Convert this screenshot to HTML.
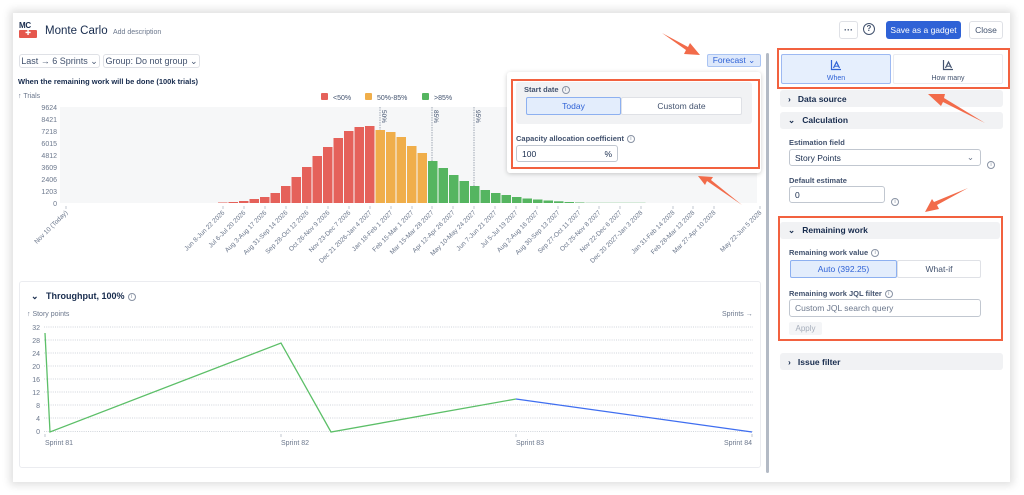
<!DOCTYPE html>
<html><head><meta charset="utf-8"><style>
*{box-sizing:border-box;margin:0;padding:0}
body{width:1024px;height:495px;background:#fff;font-family:"Liberation Sans",sans-serif;color:#172b4d;position:relative;overflow:hidden}
.a{position:absolute}
.card{left:13px;top:13px;width:997px;height:469px;background:#fff;box-shadow:0 0 8px 3px rgba(0,0,0,.13)}
.btn{border:1px solid #dfe1e6;border-radius:3px;background:#fff;font-size:9px;color:#42526e;display:flex;align-items:center;justify-content:center}
.sec{background:#f1f2f4;border-radius:3px;font-size:8.5px;font-weight:bold;color:#172b4d;display:flex;align-items:center;padding-left:8px}
.lbl{font-size:7.5px;font-weight:bold;color:#42526e;display:flex;align-items:center;gap:3px}
.inp{border:1px solid #c1c7d0;border-radius:3px;background:#fff;font-size:8.5px;color:#172b4d;display:flex;align-items:center;padding-left:5px}
.red{border:2px solid #f2613f}
.info{display:inline-block;width:8px;height:8px;border:1px solid #8993a4;border-radius:50%;font-size:6px;line-height:6px;text-align:center;color:#8993a4;font-weight:normal}
svg text{font-family:"Liberation Sans",sans-serif}
</style></head><body>
<div class="a card"></div>
<div class="a" style="left:19px;top:22px;width:18px;height:17px">
 <div style="font-size:8px;font-weight:bold;line-height:8px;color:#172b4d;letter-spacing:-.3px">MC</div>
 <div style="width:18px;height:8px;background:#e5574d;border-radius:1px;color:#fff;font-size:7px;line-height:8px;text-align:center">✚</div>
</div>
<div class="a" style="left:45px;top:25px;font-size:11.5px;color:#172b4d">Monte Carlo</div>
<div class="a" style="left:113px;top:29px;font-size:7px;color:#6b778c">Add description</div>
<div class="a btn" style="left:839px;top:21px;width:19px;height:18px;font-weight:bold">···</div>
<div class="a" style="left:863px;top:23px;width:12px;height:12px;border:1.3px solid #42526e;border-radius:50%;font-size:8px;font-weight:bold;text-align:center;line-height:10px;color:#42526e">?</div>
<div class="a" style="left:886px;top:21px;width:75px;height:18px;background:#2f62d6;border-radius:3px;color:#fff;font-size:8.5px;display:flex;align-items:center;justify-content:center">Save as a gadget</div>
<div class="a btn" style="left:969px;top:21px;width:34px;height:18px;font-size:8.5px;color:#42526e">Close</div>
<div class="a btn" style="left:19px;top:54px;width:81px;height:14px">Last → 6 Sprints ⌄</div>
<div class="a btn" style="left:103px;top:54px;width:97px;height:14px">Group: Do not group ⌄</div>
<div class="a" style="left:18px;top:77px;font-size:7.5px;font-weight:bold">When the remaining work will be done (100k trials)</div>
<div class="a" style="left:18px;top:93px;font-size:7px;color:#6b778c">↑ Trials</div>
<div class="a" style="left:707px;top:54px;width:54px;height:13px;background:#dde8fb;border:1px solid #aac4f3;border-radius:2px;font-size:8.5px;color:#2f62d6;display:flex;align-items:center;justify-content:center">Forecast ⌄</div>
<svg class="a" style="left:0;top:0" width="770" height="280">
<g font-size="7" fill="#42526e">
<rect x="321" y="93" width="7" height="7" rx="1" fill="#e5615a"/><text x="333" y="100">&lt;50%</text>
<rect x="365" y="93" width="7" height="7" rx="1" fill="#f0ae4a"/><text x="377" y="100">50%-85%</text>
<rect x="422" y="93" width="7" height="7" rx="1" fill="#55b560"/><text x="434" y="100">&gt;85%</text>
</g>
<rect x="60" y="107" width="697" height="96" fill="#f6f7f8"/>
<g font-size="7" fill="#6b778c" text-anchor="end">
<text x="57" y="110">9624</text><text x="57" y="122">8421</text><text x="57" y="134">7218</text><text x="57" y="146">6015</text><text x="57" y="158">4812</text><text x="57" y="170">3609</text><text x="57" y="182">2406</text><text x="57" y="194">1203</text><text x="57" y="206">0</text>
</g>
<g fill="#e5615a">
<rect x="218" y="202.5" width="9.5" height=".5"/><rect x="228.5" y="202" width="9.5" height="1"/><rect x="239" y="201" width="9.5" height="2"/><rect x="249.5" y="199" width="9.5" height="4"/><rect x="260" y="197" width="9.5" height="6"/><rect x="270.5" y="193" width="9.5" height="10"/><rect x="281" y="186" width="9.5" height="17"/><rect x="291.5" y="177" width="9.5" height="26"/><rect x="302" y="167" width="9.5" height="36"/><rect x="312.5" y="156" width="9.5" height="47"/><rect x="323" y="147" width="9.5" height="56"/><rect x="333.5" y="138" width="9.5" height="65"/><rect x="344" y="131" width="9.5" height="72"/><rect x="354.5" y="127" width="9.5" height="76"/><rect x="365" y="126" width="9.5" height="77"/>
</g>
<g fill="#f0ae4a">
<rect x="375.5" y="130" width="9.5" height="73"/><rect x="386" y="132" width="9.5" height="71"/><rect x="396.5" y="137" width="9.5" height="66"/><rect x="407" y="146" width="9.5" height="57"/><rect x="417.5" y="153" width="9.5" height="50"/>
</g>
<g fill="#55b560">
<rect x="428" y="161" width="9.5" height="42"/><rect x="438.5" y="168" width="9.5" height="35"/><rect x="449" y="175" width="9.5" height="28"/><rect x="459.5" y="181" width="9.5" height="22"/><rect x="470" y="186" width="9.5" height="17"/><rect x="480.5" y="190" width="9.5" height="13"/><rect x="491" y="193" width="9.5" height="10"/><rect x="501.5" y="195" width="9.5" height="8"/><rect x="512" y="197" width="9.5" height="6"/><rect x="522.5" y="198.5" width="9.5" height="4.5"/><rect x="533" y="199.5" width="9.5" height="3.5"/><rect x="543.5" y="200.5" width="9.5" height="2.5"/><rect x="554" y="201.3" width="9.5" height="1.7"/><rect x="564.5" y="202" width="9.5" height="1"/><rect x="575" y="202.3" width="9.5" height=".7" opacity=".7"/><rect x="585.5" y="202.5" width="60" height=".5" opacity=".4"/>
</g>
<g stroke="#8993a4" stroke-dasharray="1.5 1" stroke-width=".8">
<line x1="380" y1="107" x2="380" y2="130"/><line x1="432" y1="107" x2="432" y2="161"/><line x1="474" y1="107" x2="474" y2="186"/>
</g>
<g font-size="6.5" fill="#42526e">
<text transform="translate(382,110) rotate(90)">50%</text><text transform="translate(434,110) rotate(90)">85%</text><text transform="translate(476,110) rotate(90)">95%</text>
</g>
<g stroke="#b3b9c4" stroke-width=".8">
<line x1="66" y1="206" x2="66" y2="209"/>
<line x1="223" y1="206" x2="223" y2="209"/><line x1="244" y1="206" x2="244" y2="209"/><line x1="265" y1="206" x2="265" y2="209"/><line x1="286" y1="206" x2="286" y2="209"/><line x1="307" y1="206" x2="307" y2="209"/><line x1="328" y1="206" x2="328" y2="209"/><line x1="349" y1="206" x2="349" y2="209"/><line x1="370" y1="206" x2="370" y2="209"/><line x1="391" y1="206" x2="391" y2="209"/><line x1="412" y1="206" x2="412" y2="209"/><line x1="432" y1="206" x2="432" y2="209"/><line x1="453" y1="206" x2="453" y2="209"/><line x1="474" y1="206" x2="474" y2="209"/><line x1="495" y1="206" x2="495" y2="209"/><line x1="516" y1="206" x2="516" y2="209"/><line x1="537" y1="206" x2="537" y2="209"/><line x1="558" y1="206" x2="558" y2="209"/><line x1="579" y1="206" x2="579" y2="209"/><line x1="599" y1="206" x2="599" y2="209"/><line x1="620" y1="206" x2="620" y2="209"/><line x1="641" y1="206" x2="641" y2="209"/><line x1="673" y1="206" x2="673" y2="209"/><line x1="693" y1="206" x2="693" y2="209"/><line x1="714" y1="206" x2="714" y2="209"/><line x1="760" y1="206" x2="760" y2="209"/>
</g>
<g font-size="6.5" fill="#6b778c" text-anchor="end">
<text transform="translate(68,213) rotate(-45)">Nov 10 (Today)</text>
<text transform="translate(225,213) rotate(-45)">Jun 8-Jun 22 2026</text>
<text transform="translate(246,213) rotate(-45)">Jul 6-Jul 20 2026</text>
<text transform="translate(267,213) rotate(-45)">Aug 3-Aug 17 2026</text>
<text transform="translate(288,213) rotate(-45)">Aug 31-Sep 14 2026</text>
<text transform="translate(309,213) rotate(-45)">Sep 28-Oct 12 2026</text>
<text transform="translate(330,213) rotate(-45)">Oct 26-Nov 9 2026</text>
<text transform="translate(351,213) rotate(-45)">Nov 23-Dec 7 2026</text>
<text transform="translate(372,213) rotate(-45)">Dec 21 2026-Jan 4 2027</text>
<text transform="translate(393,213) rotate(-45)">Jan 18-Feb 1 2027</text>
<text transform="translate(414,213) rotate(-45)">Feb 15-Mar 1 2027</text>
<text transform="translate(434,213) rotate(-45)">Mar 15-Mar 28 2027</text>
<text transform="translate(455,213) rotate(-45)">Apr 12-Apr 26 2027</text>
<text transform="translate(476,213) rotate(-45)">May 10-May 24 2027</text>
<text transform="translate(497,213) rotate(-45)">Jun 7-Jun 21 2027</text>
<text transform="translate(518,213) rotate(-45)">Jul 5-Jul 19 2027</text>
<text transform="translate(539,213) rotate(-45)">Aug 2-Aug 16 2027</text>
<text transform="translate(560,213) rotate(-45)">Aug 30-Sep 13 2027</text>
<text transform="translate(581,213) rotate(-45)">Sep 27-Oct 11 2027</text>
<text transform="translate(601,213) rotate(-45)">Oct 25-Nov 8 2027</text>
<text transform="translate(622,213) rotate(-45)">Nov 22-Dec 6 2027</text>
<text transform="translate(643,213) rotate(-45)">Dec 20 2027-Jan 3 2028</text>
<text transform="translate(675,213) rotate(-45)">Jan 31-Feb 14 2028</text>
<text transform="translate(695,213) rotate(-45)">Feb 28-Mar 13 2028</text>
<text transform="translate(716,213) rotate(-45)">Mar 27-Apr 10 2028</text>
<text transform="translate(762,213) rotate(-45)">May 22-Jun 5 2028</text>
</g>
</svg>
<div class="a" style="left:19px;top:281px;width:742px;height:187px;border:1px solid #ebecf0;border-radius:3px"></div>
<div class="a lbl" style="left:31px;top:291px;font-size:9px;color:#172b4d">⌄ &nbsp; Throughput, 100% <span class="info">i</span></div>
<div class="a" style="left:27px;top:311px;font-size:7px;color:#6b778c">↑ Story points</div>
<div class="a" style="left:722px;top:311px;font-size:7px;color:#6b778c">Sprints →</div>
<svg class="a" style="left:0;top:0" width="770" height="480">
<g stroke="#c1c7d0" stroke-dasharray="1 1.2" stroke-width=".8">
<line x1="44" y1="327" x2="753" y2="327"/><line x1="44" y1="340" x2="753" y2="340"/><line x1="44" y1="353" x2="753" y2="353"/><line x1="44" y1="366" x2="753" y2="366"/><line x1="44" y1="379" x2="753" y2="379"/><line x1="44" y1="392" x2="753" y2="392"/><line x1="44" y1="405" x2="753" y2="405"/><line x1="44" y1="418" x2="753" y2="418"/><line x1="44" y1="431.5" x2="753" y2="431.5"/>
</g>
<g font-size="7" fill="#6b778c" text-anchor="end">
<text x="40" y="330">32</text><text x="40" y="343">28</text><text x="40" y="356">24</text><text x="40" y="369">20</text><text x="40" y="382">16</text><text x="40" y="395">12</text><text x="40" y="408">8</text><text x="40" y="421">4</text><text x="40" y="434">0</text>
</g>
<polyline points="45,333 50,432 281,343 331,432 516,399" fill="none" stroke="#5cbf68" stroke-width="1.3"/>
<polyline points="516,399 752,432" fill="none" stroke="#3f6ef0" stroke-width="1.3"/>
<g stroke="#b3b9c4" stroke-width=".8"><line x1="45" y1="434" x2="45" y2="437"/><line x1="281" y1="434" x2="281" y2="437"/><line x1="516" y1="434" x2="516" y2="437"/><line x1="752" y1="434" x2="752" y2="437"/></g>
<g font-size="7" fill="#6b778c"><text x="45" y="445">Sprint 81</text><text x="281" y="445">Sprint 82</text><text x="516" y="445">Sprint 83</text><text x="752" y="445" text-anchor="end">Sprint 84</text></g>
</svg>
<div class="a" style="left:507px;top:72px;width:254px;height:101px;background:#fff;box-shadow:0 1px 5px rgba(0,0,0,.2);border-radius:3px"></div>
<div class="a" style="left:516px;top:82px;width:236px;height:42px;background:#f1f2f4;border-radius:3px"></div>
<div class="a lbl" style="left:524px;top:85px">Start date <span class="info">i</span></div>
<div class="a" style="left:526px;top:97px;width:95px;height:18px;background:#e3edfc;border:1px solid #8db0f0;border-radius:2px;font-size:8.5px;color:#2f62d6;display:flex;align-items:center;justify-content:center">Today</div>
<div class="a" style="left:621px;top:97px;width:121px;height:18px;background:#fff;border:1px solid #dfe1e6;border-radius:2px;font-size:8.5px;color:#42526e;display:flex;align-items:center;justify-content:center">Custom date</div>
<div class="a lbl" style="left:516px;top:134px">Capacity allocation coefficient <span class="info">i</span></div>
<div class="a inp" style="left:516px;top:145px;width:102px;height:17px">100<span style="margin-left:auto;margin-right:5px">%</span></div>
<div class="a red" style="left:511px;top:79px;width:249px;height:90px"></div>
<div class="a" style="left:766px;top:53px;width:3px;height:420px;background:#b3bac5;border-radius:2px"></div>
<div class="a" style="left:781px;top:54px;width:110px;height:30px;background:#e6effd;border:1px solid #9db9f2;border-radius:2px;color:#2f62d6;font-size:7px;text-align:center;padding-top:4px">
<svg width="12" height="12" viewBox="0 0 12 12"><path d="M1.5 1v9.5H11" fill="none" stroke="#2f62d6" stroke-width="1.2"/><path d="M3.5 9L6.5 3l3 6" fill="none" stroke="#2f62d6" stroke-width="1.2"/><path d="M4.8 7.2h3.4" stroke="#2f62d6"/></svg><div style="margin-top:2px">When</div></div>
<div class="a" style="left:893px;top:54px;width:110px;height:30px;background:#fff;border:1px solid #ebecf0;border-radius:2px;color:#42526e;font-size:7px;text-align:center;padding-top:4px">
<svg width="12" height="12" viewBox="0 0 12 12"><path d="M1.5 1v9.5H11" fill="none" stroke="#42526e" stroke-width="1.2"/><path d="M3.5 9L6.5 3l3 6" fill="none" stroke="#42526e" stroke-width="1.2"/><path d="M4.8 7.2h3.4" stroke="#42526e"/></svg><div style="margin-top:2px">How many</div></div>
<div class="a red" style="left:777px;top:48px;width:233px;height:41px"></div>
<div class="a sec" style="left:780px;top:90px;width:223px;height:17px">›&nbsp;&nbsp; Data source</div>
<div class="a sec" style="left:780px;top:112px;width:223px;height:17px">⌄&nbsp;&nbsp; Calculation</div>
<div class="a lbl" style="left:789px;top:138px">Estimation field</div>
<div class="a inp" style="left:789px;top:149px;width:192px;height:17px">Story Points<span style="margin-left:auto;margin-right:6px;color:#6b778c">⌄</span></div>
<div class="a" style="left:987px;top:153px"><span class="info">i</span></div>
<div class="a lbl" style="left:789px;top:176px">Default estimate</div>
<div class="a inp" style="left:789px;top:186px;width:96px;height:17px">0</div>
<div class="a" style="left:891px;top:190px"><span class="info">i</span></div>
<div class="a sec" style="left:780px;top:222px;width:220px;height:17px">⌄&nbsp;&nbsp; Remaining work</div>
<div class="a lbl" style="left:789px;top:248px">Remaining work value <span class="info">i</span></div>
<div class="a" style="left:790px;top:260px;width:107px;height:18px;background:#e3edfc;border:1px solid #8db0f0;border-radius:2px;font-size:8.5px;color:#2f62d6;display:flex;align-items:center;justify-content:center">Auto (392.25)</div>
<div class="a" style="left:897px;top:260px;width:84px;height:18px;background:#fff;border:1px solid #dfe1e6;border-radius:2px;font-size:8.5px;color:#42526e;display:flex;align-items:center;justify-content:center">What-if</div>
<div class="a lbl" style="left:789px;top:289px">Remaining work JQL filter <span class="info">i</span></div>
<div class="a inp" style="left:789px;top:299px;width:192px;height:18px;color:#6b778c">Custom JQL search query</div>
<div class="a" style="left:789px;top:322px;width:33px;height:13px;background:#f4f5f7;border-radius:2px;font-size:8px;color:#a5adba;display:flex;align-items:center;justify-content:center">Apply</div>
<div class="a red" style="left:778px;top:216px;width:225px;height:125px"></div>
<div class="a sec" style="left:780px;top:353px;width:223px;height:17px">›&nbsp;&nbsp; Issue filter</div>
<svg class="a" style="left:0;top:0" width="1024" height="495">
<g fill="#f26b4a">
<polygon points="662,33 688,47 690,43 700,55 684,54 686,50"/>
<polygon points="742,205 707,181 705,185 698,176 713,177 711,180"/>
<polygon points="985,123 943,102 941,106 928,94 945,94 944,98"/>
<polygon points="968,188 937,205 939,209 925,212 932,199 934,202"/>
</g>
</svg>
</body></html>
